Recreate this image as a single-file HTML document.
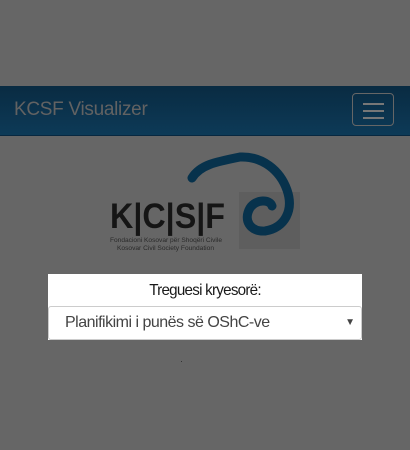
<!DOCTYPE html>
<html><head><style>
html,body{margin:0;padding:0;width:410px;height:450px;background:#666;overflow:hidden;font-family:"Liberation Sans",sans-serif;position:relative}
.nav{position:absolute;left:0;top:86px;width:410px;height:50px;background:linear-gradient(#092b42,#0d3a57);border-bottom:1px solid #082840;box-sizing:border-box}
.title{position:absolute;left:14px;top:99px;font-size:19px;color:#626262;letter-spacing:-0.3px}
.btn{position:absolute;left:352px;top:93px;width:42px;height:33px;border:1px solid #666;border-radius:4px;box-sizing:border-box}
.bar{position:absolute;left:10px;width:21px;height:2px;background:#777}
.box{position:absolute;left:48px;top:274px;width:314px;height:66px;background:#fff}
.lbl{position:absolute;left:0;width:314px;top:8px;text-align:center;font-size:16px;color:#1a1a1a;letter-spacing:-0.8px;transform:scaleX(0.95)}
.sel{position:absolute;left:0;top:32px;width:314px;height:34px;border:1px solid #ccc;border-radius:3px;box-sizing:border-box}
.sel span{position:absolute;left:16px;top:7px;font-size:16px;color:#444;letter-spacing:-0.5px}
.sel i{position:absolute;right:6px;top:10px;font-style:normal;font-size:10px;color:#444}
</style></head><body>
<div class="nav"></div>
<div class="title">KCSF Visualizer</div>
<div class="btn"><div class="bar" style="top:9px"></div><div class="bar" style="top:16px"></div><div class="bar" style="top:23px"></div></div>
<div style="position:absolute;left:239px;top:192px;width:61px;height:57px;background:#5e5e5e"></div>
<svg style="position:absolute;left:0;top:0" width="410" height="450">
<path d="M192 178 C200 165,215 162,240 157 C262 156,280 170,287 190 C294 210,285 228,265 231 C250 232,243 220,250 208 C256 199,270 199,272 206" fill="none" stroke="#07324c" stroke-width="9" stroke-linecap="round"/>
<text x="110" y="228" font-family="Liberation Sans" font-size="35" font-weight="bold" fill="#151515" textLength="115" lengthAdjust="spacingAndGlyphs">K|C|S|F</text>
<text x="110" y="242" font-family="Liberation Sans" font-size="6" fill="#2a2a2a" textLength="112" lengthAdjust="spacingAndGlyphs">Fondacioni Kosovar për Shoqëri Civile</text>
<text x="117" y="250" font-family="Liberation Sans" font-size="6" fill="#2a2a2a" textLength="97" lengthAdjust="spacingAndGlyphs">Kosovar Civil Society Foundation</text>
<rect x="181" y="361" width="1" height="1" fill="#333"/>
</svg>
<div class="box"><div class="lbl">Treguesi kryesorë:</div><div class="sel"><span>Planifikimi i punës së OShC-ve</span><i>▼</i></div></div>
</body></html>
